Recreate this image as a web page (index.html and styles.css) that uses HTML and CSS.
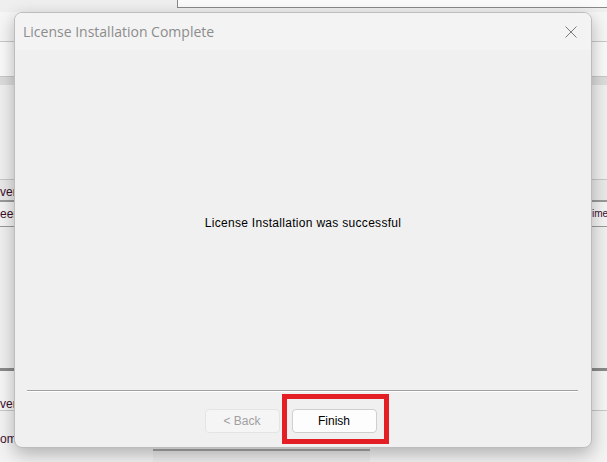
FILE: index.html
```html
<!DOCTYPE html>
<html lang="en">
<head>
  <meta charset="UTF-8" />
  <title>License Installation Complete</title>
  <link rel="stylesheet" href="styles.css">
</head>
<body>

  <div class="app">
    <div class="topbar"><div class="topbox"></div></div>
    <div class="row r1"></div>
    <div class="row r2"></div>
    <div class="row r3"><span class="frag c">C</span></div>
    <div class="row r4"></div>
    <div class="row r5"><span class="frag">ver</span></div>
    <div class="row r6"><span class="frag">een</span><span class="frag right">ime</span></div>
    <div class="row r7"></div>
    <div class="row r8"><span class="frag">vere</span></div>
    <div class="row r9"><span class="frag">om.</span><div class="lowbox"></div></div>
  </div>

  <div class="dialog">
    <div class="titlebar">
      <span class="title">License Installation Complete</span>
      <svg class="close" width="12" height="12" viewBox="0 0 12 12">
        <path d="M0.5 0.5 L11.5 11.5 M11.5 0.5 L0.5 11.5" stroke="#7a7a7a" stroke-width="1" fill="none"/>
      </svg>
    </div>
    <div class="content">
      <p class="message">License Installation was successful</p>
    </div>
    <div class="separator"></div>
    <div class="buttons">
      <button class="btn" disabled>&lt; Back</button>
      <div class="highlight">
        <button class="btn primary">Finish</button>
      </div>
    </div>
  </div>

</body>
</html>
```

FILE: styles.css
```css
* { box-sizing: border-box; margin: 0; padding: 0; }
body {
  width: 607px;
  height: 462px;
  overflow: hidden;
  background-color: #f0f0f0;
  font-family: "Liberation Sans", Arial, sans-serif;
  position: relative;
}
.app {
  display: flex;
  flex-direction: column;
  height: 462px;
}
.topbar {
  height: 12px;
  background-color: #efefef;
  padding-left: 177px;
}
.topbox {
  height: 8px;
  background-color: #fbfbfb;
  border-left: 1px solid #8a8a8a;
  border-bottom: 1px solid #8a8a8a;
}
.row {
  position: relative;
  font-size: 12px;
  color: #3a1030;
  border-bottom: 1px solid #c8c8c8;
}
.r1 { height: 30px; background-color: #f6f6f6; }
.r2 { height: 35px; background-color: #fafafa; }
.r3 { height: 8px; background-color: #dcdcdc; border-bottom: none; }
.r4 { height: 95px; background-color: #f0f0f0; }
.r5 { height: 22px; background-color: #e9e9e9; border-bottom: 2px solid #9a9a9a; }
.r6 { height: 25px; background-color: #f4f4f4; border-bottom: 1px solid #9a9a9a; }
.r7 { height: 144px; background-color: #f0f0f0; border-bottom: 3px solid #8a8a8a; }
.r8 { height: 40px; background-color: #f6f6f6; }
.r9 { flex: 1; background-color: #f3f3f3; border-bottom: none; }
.frag {
  position: absolute;
  left: 0;
  top: 5px;
  font-size: 12px;
  white-space: nowrap;
}
.frag.c { top: 28px; color: #7a4a60; }
.r8 .frag { top: 26px; }
.r9 .frag { top: 21px; }
.frag.right { left: 592px; font-size: 10px; top: 6px; }
.lowbox {
  position: absolute;
  left: 153px;
  top: 38px;
  width: 217px;
  height: 20px;
  border-top: 2px solid #a8a8a8;
  background-color: #ececec;
}

.dialog {
  position: absolute;
  left: 14px;
  top: 12px;
  width: 578px;
  height: 436px;
  background-color: #f0f0f0;
  border: 1px solid #bdbdbd;
  border-radius: 8px;
  box-shadow: 0 6px 18px rgba(0,0,0,0.28);
  display: flex;
  flex-direction: column;
  overflow: hidden;
}
.titlebar {
  height: 37px;
  flex-shrink: 0;
  background-color: #f3f3f3;
  display: flex;
  align-items: center;
  justify-content: space-between;
  padding: 0 14px 0 8px;
}
.title {
  font-family: "Open Sans", sans-serif;
  font-size: 14px;
  color: #8c8c8c;
}
.content {
  flex: 1;
  display: flex;
  align-items: center;
  justify-content: center;
  padding-top: 5px;
}
.message {
  font-size: 12px;
  letter-spacing: 0.3px;
  color: #000;
}
.separator {
  margin: 0 13px 0 12px;
  height: 2px;
  border-top: 1px solid #a0a0a0;
  border-bottom: 1px solid #ffffff;
}
.buttons {
  height: 55px;
  flex-shrink: 0;
  display: flex;
  justify-content: center;
  align-items: flex-start;
  gap: 2px;
  padding-top: 2px;
  padding-right: 13px;
}
.btn {
  width: 75px;
  height: 24px;
  margin-top: 15px;
  font-family: "Liberation Sans", Arial, sans-serif;
  font-size: 12px;
  background-color: #f5f5f5;
  border: 1px solid #e4e4e4;
  border-radius: 4px;
  color: #a0a0a0;
}
.highlight {
  border: 5px solid #e41e25;
  padding: 10px 7px 6px 5px;
}
.btn.primary {
  width: 85px;
  margin-top: 0;
  background-color: #fdfdfd;
  border-color: #cfcfcf;
  color: #000;
}
```
